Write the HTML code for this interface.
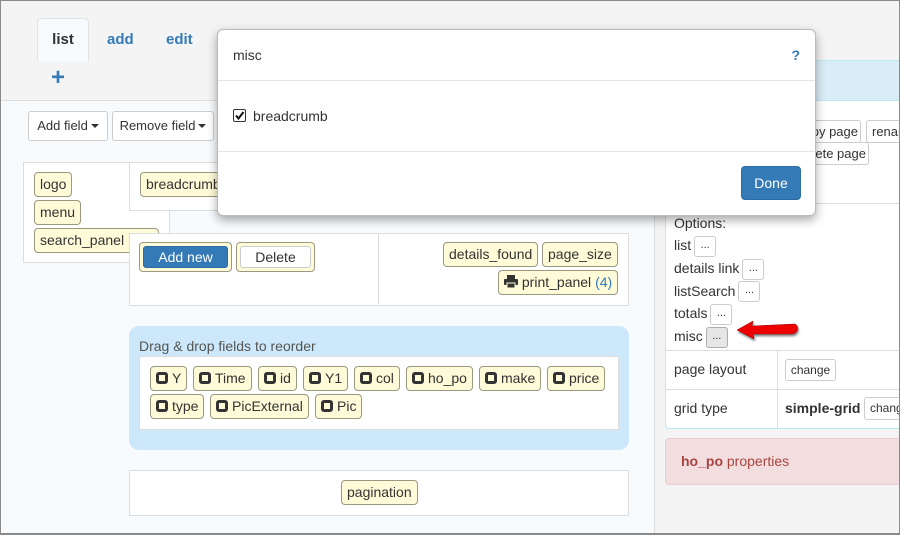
<!DOCTYPE html>
<html><head><meta charset="utf-8"><style>
*{box-sizing:border-box;margin:0;padding:0}
body{width:900px;height:535px;overflow:hidden;font-family:"Liberation Sans",sans-serif;font-size:14px;color:#333;position:relative;background:#f7fbfe}
.a{position:absolute}
.frame{left:0;top:0;width:900px;height:535px;border:1px solid #8a8a8a;border-bottom-width:2px;z-index:50;pointer-events:none}
.chip{position:absolute;background:#fffbd9;border:1px solid #9a9880;border-radius:4px;height:25px;line-height:23px;padding:0 5px;font-size:14px;white-space:nowrap;color:#333}
.btn{position:absolute;background:#fff;border:1px solid #ccc;border-radius:3px;font-size:13px;text-align:center;white-space:nowrap;color:#333}
.sq{display:inline-block;width:12px;height:12px;border:3px solid #333;border-radius:3px;vertical-align:-1px;margin-right:4px}
.caret{display:inline-block;border-top:4px solid #333;border-left:4px solid transparent;border-right:4px solid transparent;vertical-align:2px;margin-left:3px}
.box{position:absolute;background:#fff;border:1px solid #ddd}
.dots{display:inline-block;width:22px;height:21px;border:1px solid #ccc;border-radius:3px;background:#fff;font-size:11px;text-align:center;line-height:17px;vertical-align:middle;margin-left:3px}
</style></head><body>
<div class="a" style="left:0;top:0;width:900px;height:101px;background:#f4f4f4;border-bottom:1px solid #ddd"></div>
<div class="a" style="left:37px;top:18px;width:52px;height:43px;background:#f7fbfe;border:1px solid #e3e3e3;border-bottom:none;border-radius:4px 4px 0 0;font-weight:bold;text-align:center;line-height:41px;font-size:15px">list</div>
<div class="a" style="left:107px;top:31px;font-weight:bold;color:#337ab7;font-size:15px">add</div>
<div class="a" style="left:166px;top:31px;font-weight:bold;color:#337ab7;font-size:15px">edit</div>
<div class="a" style="left:51px;top:66px;font-weight:bold;color:#337ab7;font-size:24px;line-height:24px">+</div>

<div class="a" style="left:654px;top:101px;width:246px;height:434px;background:#f4f4f4;border-left:1px solid #ddd"></div>

<div class="btn" style="left:28px;top:111px;width:80px;height:30px;line-height:28px">Add field<span class="caret"></span></div>
<div class="btn" style="left:112px;top:111px;width:102px;height:30px;line-height:28px">Remove field<span class="caret"></span></div>

<div class="box" style="left:23px;top:162px;width:147px;height:101px"></div>
<div class="box" style="left:129px;top:162px;width:120px;height:49px;border-left:1px solid #ddd"></div>
<div class="chip" style="left:34px;top:172px">logo</div>
<div class="chip" style="left:34px;top:200px">menu</div>
<div class="chip" style="left:34px;top:228px;width:125px">search_panel</div>
<div class="chip" style="left:140px;top:172px">breadcrumb</div>

<div class="box" style="left:129px;top:233px;width:250px;height:73px"></div>
<div class="box" style="left:378px;top:233px;width:251px;height:73px"></div>
<div class="chip" style="left:139px;top:242px;width:93px;height:30px;padding:3px"><div style="background:#337ab7;border:1px solid #2e6da4;color:#fff;border-radius:3px;height:22px;line-height:20px;text-align:center">Add new</div></div>
<div class="chip" style="left:236px;top:242px;width:79px;height:30px;padding:3px"><div style="background:#fff;border:1px solid #ccc;border-radius:3px;height:22px;line-height:20px;text-align:center">Delete</div></div>
<div class="chip" style="left:443px;top:242px">details_found</div>
<div class="chip" style="left:542px;top:242px">page_size</div>
<div class="chip" style="left:498px;top:270px"><svg width="14" height="13" style="vertical-align:-1px"><rect x="3" y="0" width="8" height="4" fill="#333"/><rect x="0" y="4" width="14" height="6" rx="1" fill="#333"/><rect x="3" y="8" width="8" height="5" fill="#333" stroke="#fffbd9" stroke-width="1"/></svg> print_panel <span style="color:#337ab7">(4)</span></div>

<div class="a" style="left:129px;top:326px;width:500px;height:124px;background:#cce8fa;border-radius:10px"></div>
<div class="a" style="left:139px;top:338px;font-size:14px;color:#555">Drag &amp; drop fields to reorder</div>
<div class="box" style="left:139px;top:356px;width:480px;height:74px"></div>
<div class="chip" style="left:150px;top:366px"><span class="sq"></span>Y</div>
<div class="chip" style="left:193px;top:366px"><span class="sq"></span>Time</div>
<div class="chip" style="left:258px;top:366px"><span class="sq"></span>id</div>
<div class="chip" style="left:303px;top:366px"><span class="sq"></span>Y1</div>
<div class="chip" style="left:354px;top:366px"><span class="sq"></span>col</div>
<div class="chip" style="left:406px;top:366px"><span class="sq"></span>ho_po</div>
<div class="chip" style="left:479px;top:366px"><span class="sq"></span>make</div>
<div class="chip" style="left:547px;top:366px"><span class="sq"></span>price</div>
<div class="chip" style="left:150px;top:394px"><span class="sq"></span>type</div>
<div class="chip" style="left:210px;top:394px"><span class="sq"></span>PicExternal</div>
<div class="chip" style="left:315px;top:394px"><span class="sq"></span>Pic</div>

<div class="box" style="left:129px;top:470px;width:500px;height:46px"></div>
<div class="chip" style="left:341px;top:480px">pagination</div>

<!-- right panel -->
<div class="a" style="left:665px;top:60px;width:240px;height:369px;background:#fff;border:1px solid #bce8f1;border-radius:4px"></div>
<div class="a" style="left:666px;top:61px;width:240px;height:40px;background:#d9edf7;border-bottom:1px solid #bce8f1"></div>
<div class="btn" style="left:795px;top:120px;width:66px;height:23px;line-height:21px">copy page</div>
<div class="btn" style="left:866px;top:120px;width:50px;height:23px;line-height:21px;text-align:left;padding-left:5px">rename</div>
<div class="btn" style="left:795px;top:142px;width:74px;height:23px;line-height:21px">delete page</div>
<div class="a" style="left:666px;top:203px;width:234px;border-top:1px solid #ddd"></div>
<div class="a" style="left:674px;top:212px;line-height:22px;font-size:14px">Options:<br>list<span class="dots">...</span><br>details link<span class="dots">...</span><br>listSearch<span class="dots">...</span><br>totals<span class="dots">...</span><br>misc<span class="dots" style="background:#e6e6e6;border-color:#adadad">...</span></div>
<svg class="a" style="left:735px;top:318px" width="66" height="24"><path d="M2 12 L18 3 L17 8 L60 6 Q64 8 62 13 Q60 16 56 16 L18 16 L19 21 Z" fill="#e00" stroke="#900" stroke-width="0.5" style="filter:drop-shadow(1px 2px 1px rgba(0,0,0,.5))"/></svg>
<div class="a" style="left:666px;top:350px;width:234px;border-top:1px solid #ddd"></div>
<div class="a" style="left:666px;top:389px;width:234px;border-top:1px solid #ddd"></div>
<div class="a" style="left:777px;top:350px;height:78px;border-left:1px solid #ddd"></div>
<div class="a" style="left:674px;top:361px">page layout</div>
<div class="btn" style="left:785px;top:359px;width:51px;height:22px;line-height:20px;font-size:12px">change</div>
<div class="a" style="left:674px;top:400px">grid type</div>
<div class="a" style="left:785px;top:400px;font-weight:bold">simple-grid</div>
<div class="btn" style="left:864px;top:397px;width:50px;height:23px;line-height:21px;font-size:12px;text-align:left;padding-left:5px">change</div>
<div class="a" style="left:665px;top:438px;width:240px;height:47px;background:#f2dede;border:1px solid #ebccd1;border-radius:4px;color:#a94442;padding:14px 0 0 15px"><b>ho_po</b> properties</div>

<!-- modal -->
<div class="a" style="left:217px;top:29px;width:599px;height:187px;background:#fff;border:1px solid #bbb;border-radius:6px;box-shadow:0 4px 10px rgba(0,0,0,.35)">
<div class="a" style="left:15px;top:17px">misc</div>
<div class="a" style="right:15px;top:17px;color:#337ab7;font-weight:bold">?</div>
<div class="a" style="left:0;top:50px;width:597px;border-top:1px solid #e5e5e5"></div>
<div class="a" style="left:15px;top:79px;width:13px;height:13px;border:1px solid #333;border-radius:2px"><svg width="11" height="11" style="position:absolute;left:0;top:0"><path d="M2 5.5 L4.5 8.5 L9.5 2" fill="none" stroke="#111" stroke-width="2"/></svg></div>
<div class="a" style="left:35px;top:78px">breadcrumb</div>
<div class="a" style="left:0;top:121px;width:597px;border-top:1px solid #e5e5e5"></div>
<div class="a" style="left:523px;top:136px;width:60px;height:34px;background:#337ab7;border:1px solid #2e6da4;border-radius:4px;color:#fff;text-align:center;line-height:32px">Done</div>
</div>
<div class="a frame"></div>
</body></html>
